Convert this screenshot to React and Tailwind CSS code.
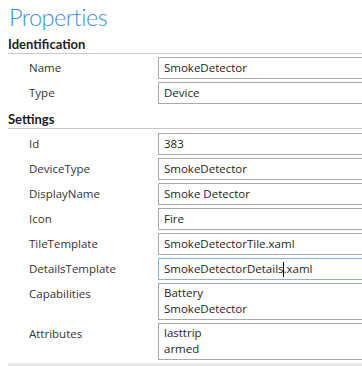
import React from "react";

const Row = ({ label, children, tall, focused }) => (
  <div className="flex items-start mb-[3px]">
    <div className="w-[150px] pl-[21px] pt-[3px] text-[11.5px] leading-[16px] text-[#333]">{label}</div>
    <div
      className={`flex-1 -mr-[4px] border ${focused ? "border-[#7eb4ea]" : "border-[#a9a9a9]"} pl-[5px] text-[11.5px] leading-[16px] text-[#1e1e1e] ${tall ? "h-[37px] pt-[1px]" : "h-[22px] pt-[2px]"}`}
    >
      {children}
    </div>
  </div>
);

const Header = ({ children, className = "" }) => (
  <div
    className={`border-b border-[#c8c8c8] text-[13px] font-bold leading-[16px] text-[#1e1e1e] pb-[1px] ${className}`}
    style={{ fontFamily: 'Lato, "Open Sans", sans-serif' }}
  >
    {children}
  </div>
);

export default function App() {
  return (
    <div
      className="w-[362px] h-[366px] overflow-hidden bg-white pl-[8px] relative"
      style={{ fontFamily: '"Open Sans", "Noto Sans", sans-serif' }}
    >
      <div
        className="text-[23.5px] font-light leading-[32px] text-[#3a8ee6] pl-[1px] pt-[1px] -mb-[1px] tracking-[-0.5px]"
        style={{ fontFamily: 'Lato, "Open Sans", sans-serif' }}
      >
        Properties
      </div>
      <Header className="mt-[4px] mb-[3px]">Identification</Header>
      <Row label="Name">SmokeDetector</Row>
      <Row label="Type">Device</Row>
      <Header className="mt-[7px] mb-[4px]">Settings</Header>
      <Row label="Id">383</Row>
      <Row label="DeviceType">SmokeDetector</Row>
      <Row label="DisplayName">Smoke Detector</Row>
      <Row label="Icon">Fire</Row>
      <Row label="TileTemplate">SmokeDetectorTile.xaml</Row>
      <Row label="DetailsTemplate" focused>
        SmokeDetectorDetails<span className="inline-block w-px h-[15px] bg-black align-middle -mx-[0.5px]"></span>.xaml
      </Row>
      <Row label="Capabilities" tall>
        Battery
        <br />
        SmokeDetector
      </Row>
      <Row label="Attributes" tall>
        lasttrip
        <br />
        armed
      </Row>
      <div className="absolute left-[8px] right-0 bottom-0 h-[3px] bg-[#e6e6e6]"></div>
    </div>
  );
}
